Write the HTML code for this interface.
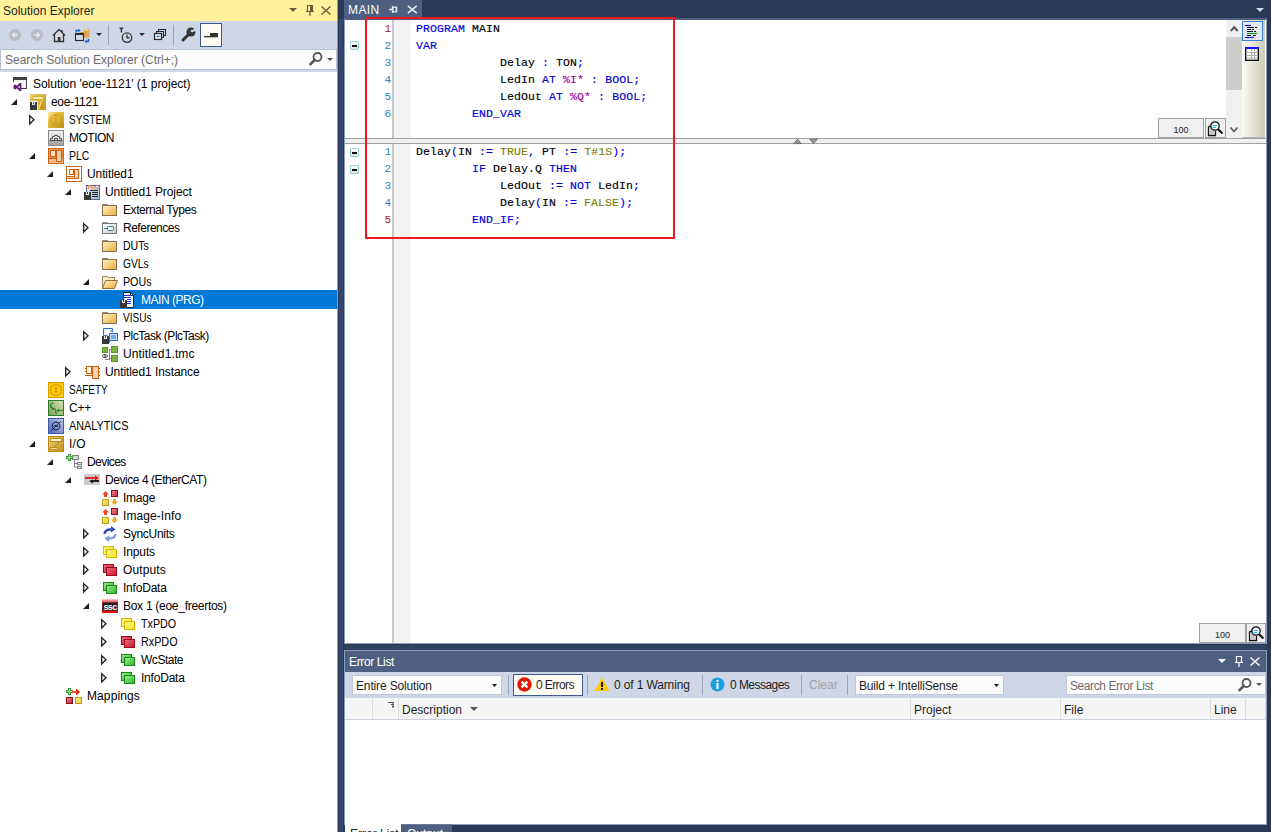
<!DOCTYPE html>
<html><head><meta charset="utf-8">
<style>
*{margin:0;padding:0;box-sizing:border-box}
html,body{width:1271px;height:832px;overflow:hidden;background:#293955;font-family:"Liberation Sans",sans-serif;font-size:12px;color:#1e1e1e}
.abs{position:absolute}
svg{position:absolute;overflow:visible}
#se{position:absolute;left:0;top:0;width:337px;height:832px;background:#fff}
#sehdr{position:absolute;left:0;top:0;width:337px;height:21px;background:#fff29d}
#sehdr .t{position:absolute;left:3px;top:4px;font-size:12px;color:#1e1e1e}
#setb{position:absolute;left:0;top:21px;width:337px;height:28px;background:#cfd6e5}
#sesearch{position:absolute;left:0;top:49px;width:337px;height:21px;background:#fcfcfc;border:1px solid #b9c1d2}
#sesearch .t{position:absolute;left:4px;top:3px;color:#6d6d6d}
#sebot{position:absolute;left:0;top:70px;width:337px;height:2px;background:#cfd6e5}
.sel{position:absolute;left:0;width:337px;height:19px;background:#0078d7}
.tl{position:absolute;height:18px;line-height:18px;white-space:nowrap;color:#000}
.tl.s{color:#fff}
.tab{position:absolute;left:344px;top:0;width:78px;height:19px;background:#4d6082;color:#fff}
.ed{position:absolute;background:#fff}
.ln{position:absolute;left:360px;width:31px;text-align:right;font-family:"Liberation Mono",monospace;font-size:11px;line-height:17px;height:17px}
.cd{position:absolute;left:416px;white-space:pre;font-family:"Liberation Mono",monospace;font-size:11.5px;line-height:17px;height:17px;color:#000;letter-spacing:0.1px;-webkit-text-stroke:0.15px currentColor}
.fold{position:absolute;width:9px;height:9px;border:1px solid #9ad0d8;background:linear-gradient(#fff,#e0e0e0);border-radius:1px}
.fold:after{content:"";position:absolute;left:1px;top:3px;width:5px;height:2px;background:#111}
.gsep{position:absolute;left:392px;width:2px;background:#c8c8c8}
.gcol{position:absolute;left:394px;width:17px;background:#f3f3f3}
.zoom{position:absolute;background:#f0f0f0;border:1px solid #a0a0a0;font-size:9px;text-align:center;color:#1e1e1e;line-height:22px !important}
.mag{position:absolute;background:#f0f0f0;border:1px solid #a0a0a0}
.redbox{position:absolute;left:365px;top:17px;width:310px;height:222px;border:2px solid #f01820}
#el{position:absolute;left:344px;top:650px;width:923px;height:175px;background:#fff;border:1px solid #8e9bc0}
#elhdr{position:absolute;left:0;top:0;width:921px;height:21px;background:#4d6082}
#elhdr .t{position:absolute;left:4px;top:4px;color:#fff;letter-spacing:-0.37px}
#eltb{position:absolute;left:0;top:21px;width:921px;height:26px;background:#cfd6e5}
.dd{position:absolute;background:#fcfcfc;border:1px solid #c0c8d8;height:20px}
.dd .t{position:absolute;left:3px;top:3px;color:#1e1e1e}
.vsep{position:absolute;width:1px;background:#99a4bf}
#elcol{position:absolute;left:0;top:47px;width:921px;height:22px;background:#f5f5f5;border-bottom:1px solid #ccd3e0}
.ch{position:absolute;top:2px;height:21px;line-height:21px;color:#1e1e1e}
.csep{position:absolute;top:0;width:1px;height:21px;background:#dcdcdc}
</style></head><body>

<!-- Solution explorer -->
<div id="se">
 <div id="sehdr"><div class="t">Solution Explorer</div>
  <svg style="left:289px;top:8px" width="9" height="5"><path d="M0 0 H8 L4 4 Z" fill="#6b5c3a"/></svg>
  <svg style="left:305px;top:5px" width="10" height="11"><path d="M2.5 0.5 H7.5 V6.5 H2.5 Z M1 6.5 H9 M5 6.5 V11" fill="none" stroke="#6b5c3a" stroke-width="1.2"/><rect x="5" y="1" width="2" height="5" fill="#6b5c3a"/></svg>
  <svg style="left:321px;top:6px" width="10" height="9"><path d="M0.5 0.5 L9.5 8.5 M9.5 0.5 L0.5 8.5" stroke="#6b5c3a" stroke-width="1.4"/></svg>
 </div>
 <div id="setb">
  <svg style="left:9px;top:8px" width="13" height="13"><circle cx="6" cy="6" r="6" fill="#b9bcc4"/><path d="M9 6 H3.5 M6 3.5 L3.5 6 L6 8.5" stroke="#e6e8ee" stroke-width="1.5" fill="none"/></svg>
  <svg style="left:31px;top:8px" width="13" height="13"><circle cx="6" cy="6" r="6" fill="#b9bcc4"/><path d="M3 6 H8.5 M6 3.5 L8.5 6 L6 8.5" stroke="#e6e8ee" stroke-width="1.5" fill="none"/></svg>
  <svg style="left:52px;top:7px" width="15" height="15"><path d="M1 7.5 L7 1.5 L13 7.5 M2.5 6 V13.5 H11.5 V6 M10 2 V4" fill="#d8d8e0" stroke="#333" stroke-width="1.3"/><rect x="5.8" y="9" width="2.6" height="4.5" fill="#333"/></svg>
  <svg style="left:74px;top:7px" width="17" height="16"><path d="M10 1.5 H12 L13 0.8 H15.5 V9.5 H6 V4 H10 Z" fill="#e0a850"/><rect x="11" y="1.5" width="3.5" height="1.2" fill="#f6e0b0"/><rect x="1.5" y="5.5" width="8" height="7" fill="#d8d8e0" stroke="#2a2a2a" stroke-width="1.1"/><rect x="1" y="5" width="9" height="2" fill="#2a2a2a"/><path d="M2.2 4.5 V2.5 H5" stroke="#1560c0" stroke-width="1.3" fill="none"/><path d="M4.5 0.8 L6.6 2.5 L4.5 4.2 Z" fill="#1560c0"/><path d="M14.5 11 V13.5 H12" stroke="#1560c0" stroke-width="1.4" fill="none"/><path d="M12.5 11.8 L10.5 13.5 L12.5 15.2 Z" fill="#1560c0"/></svg>
  <svg style="left:96px;top:12px" width="7" height="4"><path d="M0 0 H6 L3 3 Z" fill="#1e2a40"/></svg>
  <div class="vsep" style="left:108px;top:4px;height:20px"></div>
  <svg style="left:118px;top:6px" width="16" height="17"><path d="M0.8 0.6 H6 L3.4 3 Z" fill="#333"/><rect x="2.7" y="2" width="1.4" height="3.5" fill="#333"/><circle cx="9" cy="10.6" r="4.7" fill="none" stroke="#333" stroke-width="1.3"/><path d="M9 7.6 V10.9 H11.6" stroke="#333" stroke-width="1.3" fill="none"/></svg>
  <svg style="left:139px;top:12px" width="7" height="4"><path d="M0 0 H6 L3 3 Z" fill="#1e2a40"/></svg>
  <svg style="left:153px;top:7px" width="14" height="13"><rect x="1.5" y="5.5" width="7" height="6" fill="#e4e6ee" stroke="#2a2a2a" stroke-width="1.2"/><path d="M3.5 8.5 H6.5" stroke="#1560c0" stroke-width="1"/><path d="M3.5 5 V3.5 H10.5 V9.5 H9 M5.5 3 V1.5 H12.5 V7.5 H11" fill="none" stroke="#2a2a2a" stroke-width="1.1"/></svg>
  <div class="vsep" style="left:173px;top:4px;height:20px"></div>
  <svg style="left:181px;top:6px" width="16" height="15"><circle cx="10" cy="5" r="4.5" fill="#333"/><path d="M10 5 L13 1.5 L16 4 Z" fill="#cfd6e5"/><circle cx="11" cy="4" r="1.3" fill="#cfd6e5"/><path d="M8 7 L2 13" stroke="#333" stroke-width="3" stroke-linecap="round"/></svg>
  <div class="abs" style="left:200px;top:2px;width:22px;height:24px;background:#fffdf6;border:1.5px solid #3c5a8c"></div>
  <svg style="left:204px;top:12px" width="14" height="5"><rect x="0" y="3" width="7" height="1.3" fill="#333"/><rect x="6" y="0" width="8" height="4.3" fill="#333"/></svg>
 </div>
 <div id="sesearch"><div class="t">Search Solution Explorer (Ctrl+;)</div>
  <svg style="left:307px;top:1px" width="15" height="16"><circle cx="9.5" cy="6" r="4" fill="none" stroke="#555" stroke-width="1.8"/><path d="M6.8 8.8 L2.5 13.2" stroke="#555" stroke-width="2.6" stroke-linecap="round"/></svg>
  <svg style="left:326px;top:8px" width="7" height="4"><path d="M0 0 H6 L3 3 Z" fill="#555"/></svg>
 </div>
 <div id="sebot"></div>
<svg class="ic" style="left:12px;top:76px" width="16" height="16"><rect x="1.5" y="1.5" width="13" height="11" fill="#f4f4f4" stroke="#424242"/><rect x="1" y="1" width="14" height="3" fill="#424242"/><rect x="0" y="6" width="9" height="10" fill="#fff"/><path d="M2.5 9 L2.5 13 M2.5 9 L8.5 14.5 M2.5 13 L8.5 7.5 M8.5 7 L8.5 15" stroke="#68217a" stroke-width="1.8" fill="none"/></svg>
<div class="tl" style="left:33px;top:75px;letter-spacing:-0.03px">Solution 'eoe-1121' (1 project)</div>
<svg class="a" style="left:11px;top:99px" width="6" height="6"><path d="M6 0 L6 6 L0 6 Z" fill="#1e1e1e"/></svg>
<svg class="ic" style="left:30px;top:94px" width="16" height="16"><defs><linearGradient id="gp" x1="0" y1="0" x2="1" y2="1"><stop offset="0" stop-color="#f0d070"/><stop offset="1" stop-color="#c09010"/></linearGradient></defs><rect x="0" y="0" width="16" height="16" fill="url(#gp)"/><rect x="2.5" y="2.5" width="10.5" height="3" fill="#f8e6a8" stroke="#d8b040" stroke-width="1"/><path d="M12.5 5.5 L8.5 15.5" stroke="#f0d880" stroke-width="1.6"/><path d="M13.6 5.8 L9.8 15.5" stroke="#b88a10" stroke-width="0.8"/><rect x="0" y="7" width="8" height="9" fill="#eef0f8"/><rect x="0" y="8" width="7" height="8" fill="#383838"/><rect x="2" y="8" width="3" height="3" fill="#f0f0f0"/><rect x="3" y="8.5" width="1" height="1.8" fill="#383838"/></svg>
<div class="tl" style="left:51px;top:93px;letter-spacing:-0.34px">eoe-1121</div>
<svg class="a" style="left:29px;top:115px" width="7" height="11"><path d="M0.7 0.6 L5 4.8 L0.7 9 Z" fill="none" stroke="#1e1e1e" stroke-width="1.3" stroke-linejoin="miter"/></svg>
<svg class="ic" style="left:48px;top:112px" width="16" height="16"><defs><linearGradient id="gs" x1="0" y1="0" x2="1" y2="1"><stop offset="0" stop-color="#f8e8a0"/><stop offset="0.35" stop-color="#e8c040"/><stop offset="1" stop-color="#c09010"/></linearGradient></defs><rect x="0" y="0" width="16" height="16" fill="url(#gs)"/><path d="M8 2.5 A5.5 5.5 0 1 0 8 13.5 M8 2 V14 M8 2.5 L10 2.2 L10.5 3.5 L12 3.5 L12.5 5 L13.8 5.8 L13.3 7.3 L14 8.5 L13 9.8 L13.3 11.2 L11.8 11.8 L11.2 13.2 L9.6 13.2 L8 13.5 M5 7 Q6.5 5.5 8 7 M5 9.5 Q6.5 11 8 9.5" fill="none" stroke="#c8961e" stroke-width="1"/></svg>
<div class="tl" style="left:69px;top:111px;transform:scaleX(0.847);transform-origin:0 0">SYSTEM</div>
<svg class="ic" style="left:48px;top:130px" width="16" height="16"><defs><linearGradient id="gm" x1="0" y1="0" x2="0" y2="1"><stop offset="0" stop-color="#f2f2f2"/><stop offset="1" stop-color="#c4c4c4"/></linearGradient></defs><rect x="0.5" y="0.5" width="15" height="15" fill="url(#gm)" stroke="#8c8c8c"/><path d="M1.5 10.5 H14.5 M2.5 10.5 V8.5 H4.5 V6.5 H6.5 V5.5 H9.5 V6.5 H11.5 V8.5 H13.5 V10.5 M6.5 10.5 V8.5 H9.5 V10.5" fill="none" stroke="#505050" stroke-width="1"/><rect x="1" y="11" width="14" height="4" fill="#a8a8a8"/></svg>
<div class="tl" style="left:69px;top:129px;letter-spacing:-0.5px">MOTION</div>
<svg class="a" style="left:29px;top:153px" width="6" height="6"><path d="M6 0 L6 6 L0 6 Z" fill="#1e1e1e"/></svg>
<svg class="ic" style="left:48px;top:148px" width="16" height="16"><defs><linearGradient id="gpl" x1="0" y1="0" x2="1" y2="1"><stop offset="0" stop-color="#f0a866"/><stop offset="1" stop-color="#e07a28"/></linearGradient></defs><rect x="0.5" y="0.5" width="15" height="15" fill="url(#gpl)" stroke="#d0620e"/><rect x="1" y="10" width="14" height="5" fill="#f3b684"/><rect x="3" y="3" width="4" height="5" fill="#fde6cc"/><rect x="9" y="3" width="4" height="10" fill="#f8c99c"/><path d="M2.5 2.5 H7.5 V8.5 H2.5 Z M8.5 2.5 H13.5 V13.5 H8.5 Z M1 10.5 H8.5" fill="none" stroke="#c95e10"/></svg>
<div class="tl" style="left:69px;top:147px;transform:scaleX(0.867);transform-origin:0 0">PLC</div>
<svg class="a" style="left:47px;top:171px" width="6" height="6"><path d="M6 0 L6 6 L0 6 Z" fill="#1e1e1e"/></svg>
<svg class="ic" style="left:66px;top:166px" width="16" height="16"><rect x="0.5" y="0.5" width="15" height="15" fill="#fff" stroke="#d0620e"/><rect x="3.5" y="3.5" width="4" height="5" fill="#fff4e6" stroke="#d0620e"/><rect x="8.5" y="3.5" width="4" height="9" fill="#f6d2ae" stroke="#d0620e"/><path d="M1 10.5 H8.5 M1.5 12.5 H8" stroke="#d0620e"/><rect x="1" y="11" width="7" height="1" fill="#f6d2ae"/></svg>
<div class="tl" style="left:87px;top:165px;letter-spacing:-0.1px">Untitled1</div>
<svg class="a" style="left:65px;top:189px" width="6" height="6"><path d="M6 0 L6 6 L0 6 Z" fill="#1e1e1e"/></svg>
<svg class="ic" style="left:84px;top:184px" width="16" height="16"><defs><linearGradient id="gpp" x1="0" y1="0" x2="1" y2="1"><stop offset="0" stop-color="#e8eef6"/><stop offset="1" stop-color="#9eb3d0"/></linearGradient></defs><rect x="2.5" y="1.5" width="13" height="14" fill="url(#gpp)" stroke="#5a6e8c"/><rect x="2" y="1" width="14" height="1" fill="#2040e0"/><text x="9.3" y="4.6" font-size="5.5" font-family="Liberation Sans" font-weight="bold" fill="#f08a10" text-anchor="middle">PLC</text><path d="M6 6.5 H14 M8 8.5 H14 M8 10.5 H14 M8 12.5 H14" stroke="#222" stroke-width="1"/><rect x="0" y="8" width="7" height="8" fill="#383838"/><rect x="2" y="8" width="3" height="3" fill="#f0f0f0"/><rect x="3" y="8" width="1" height="2" fill="#383838"/></svg>
<div class="tl" style="left:105px;top:183px;letter-spacing:-0.08px">Untitled1 Project</div>
<svg class="ic" style="left:102px;top:202px" width="16" height="16"><defs><linearGradient id="gf" x1="0" y1="0" x2="1" y2="1"><stop offset="0" stop-color="#fff6c8"/><stop offset="1" stop-color="#eaa830"/></linearGradient></defs><path d="M0.5 4 V2.5 H5.5 L6.5 3.5 H6.5 V4" fill="#fbeec0" stroke="#9a8060"/><rect x="0.5" y="3.5" width="14" height="10" fill="url(#gf)" stroke="#8a7050"/></svg>
<div class="tl" style="left:123px;top:201px;letter-spacing:-0.42px">External Types</div>
<svg class="a" style="left:83px;top:223px" width="7" height="11"><path d="M0.7 0.6 L5 4.8 L0.7 9 Z" fill="none" stroke="#1e1e1e" stroke-width="1.3" stroke-linejoin="miter"/></svg>
<svg class="ic" style="left:102px;top:220px" width="16" height="16"><defs><linearGradient id="gr" x1="0" y1="0" x2="1" y2="1"><stop offset="0" stop-color="#ffffff"/><stop offset="1" stop-color="#c8c8c8"/></linearGradient></defs><path d="M0.5 4 V2.5 H5.5 L6.5 3.5 V4" fill="#f2f2f2" stroke="#999"/><rect x="0.5" y="3.5" width="14" height="10" fill="url(#gr)" stroke="#777"/><rect x="5.5" y="6.5" width="6" height="4" rx="1" fill="#e8f4f4" stroke="#3a7d8c"/><path d="M2 8.5 H5.5" stroke="#3a7d8c"/></svg>
<div class="tl" style="left:123px;top:219px;letter-spacing:-0.49px">References</div>
<svg class="ic" style="left:102px;top:238px" width="16" height="16"><defs><linearGradient id="gf" x1="0" y1="0" x2="1" y2="1"><stop offset="0" stop-color="#fff6c8"/><stop offset="1" stop-color="#eaa830"/></linearGradient></defs><path d="M0.5 4 V2.5 H5.5 L6.5 3.5 H6.5 V4" fill="#fbeec0" stroke="#9a8060"/><rect x="0.5" y="3.5" width="14" height="10" fill="url(#gf)" stroke="#8a7050"/></svg>
<div class="tl" style="left:123px;top:237px;transform:scaleX(0.879);transform-origin:0 0">DUTs</div>
<svg class="ic" style="left:102px;top:256px" width="16" height="16"><defs><linearGradient id="gf" x1="0" y1="0" x2="1" y2="1"><stop offset="0" stop-color="#fff6c8"/><stop offset="1" stop-color="#eaa830"/></linearGradient></defs><path d="M0.5 4 V2.5 H5.5 L6.5 3.5 H6.5 V4" fill="#fbeec0" stroke="#9a8060"/><rect x="0.5" y="3.5" width="14" height="10" fill="url(#gf)" stroke="#8a7050"/></svg>
<div class="tl" style="left:123px;top:255px;transform:scaleX(0.850);transform-origin:0 0">GVLs</div>
<svg class="a" style="left:83px;top:279px" width="6" height="6"><path d="M6 0 L6 6 L0 6 Z" fill="#1e1e1e"/></svg>
<svg class="ic" style="left:102px;top:274px" width="16" height="16"><defs><linearGradient id="gfo" x1="0" y1="0" x2="1" y2="1"><stop offset="0" stop-color="#fff6c8"/><stop offset="1" stop-color="#eaa830"/></linearGradient></defs><path d="M0.5 14 V2.5 H5.5 L6.5 3.5 H12.5 V6.5" fill="#fbeec0" stroke="#9a8060"/><path d="M0.5 14.5 L3.5 6.5 H15.5 L12.5 14.5 Z" fill="url(#gfo)" stroke="#8a7050"/></svg>
<div class="tl" style="left:123px;top:273px;transform:scaleX(0.890);transform-origin:0 0">POUs</div>
<div class="sel" style="top:290px"></div>
<svg class="ic" style="left:120px;top:292px" width="16" height="16"><path d="M3.5 0.5 H10.5 L13.5 3.5 V15.5 H3.5 Z" fill="#fff" stroke="#222"/><path d="M10.5 0.5 V3.5 H13.5" fill="none" stroke="#222"/><path d="M4 3.5 H10 M4 5.5 H11 M7 7.5 H11 M7 9.5 H11 M7 11.5 H11" stroke="#1a2ce8" stroke-width="1"/><rect x="0" y="8" width="7" height="8" fill="#383838"/><rect x="2" y="8" width="3" height="3" fill="#f0f0f0"/><rect x="3" y="8" width="1" height="2" fill="#383838"/></svg>
<div class="tl s" style="left:141px;top:291px;letter-spacing:-0.48px">MAIN (PRG)</div>
<svg class="ic" style="left:102px;top:310px" width="16" height="16"><defs><linearGradient id="gf" x1="0" y1="0" x2="1" y2="1"><stop offset="0" stop-color="#fff6c8"/><stop offset="1" stop-color="#eaa830"/></linearGradient></defs><path d="M0.5 4 V2.5 H5.5 L6.5 3.5 H6.5 V4" fill="#fbeec0" stroke="#9a8060"/><rect x="0.5" y="3.5" width="14" height="10" fill="url(#gf)" stroke="#8a7050"/></svg>
<div class="tl" style="left:123px;top:309px;transform:scaleX(0.838);transform-origin:0 0">VISUs</div>
<svg class="a" style="left:83px;top:331px" width="7" height="11"><path d="M0.7 0.6 L5 4.8 L0.7 9 Z" fill="none" stroke="#1e1e1e" stroke-width="1.3" stroke-linejoin="miter"/></svg>
<svg class="ic" style="left:102px;top:328px" width="16" height="16"><path d="M5.5 7.5 H1.5 V0.5 H10.5 V2" fill="none" stroke="#1e6fd9"/><path d="M8 2.5 H12 L10 4.5 Z" fill="#1e6fd9"/><rect x="7.5" y="5.5" width="8" height="7" fill="#cfe1f7" stroke="#1e6fd9"/><path d="M9 8 H14 M9 10 H14" stroke="#1e6fd9"/><path d="M7.5 12.5 V14.5 H5" fill="none" stroke="#1e6fd9"/><rect x="0" y="8" width="7" height="8" fill="#383838"/><rect x="2" y="8" width="3" height="3" fill="#f0f0f0"/><rect x="3" y="8" width="1" height="2" fill="#383838"/></svg>
<div class="tl" style="left:123px;top:327px;letter-spacing:-0.48px">PlcTask (PlcTask)</div>
<svg class="ic" style="left:102px;top:346px" width="16" height="16"><rect x="0.5" y="1.5" width="5" height="5" fill="#7cb342" stroke="#5f9a30"/><rect x="9.5" y="0.5" width="6" height="6" fill="#7cb342" stroke="#5f9a30"/><rect x="9.5" y="9.5" width="6" height="6" fill="#7cb342" stroke="#5f9a30"/><path d="M9.5 3.5 H7.5 V13.5 H3 M7.5 12.5 H9.5" stroke="#888" fill="none" stroke-width="1.2"/><ellipse cx="3" cy="10" rx="2.6" ry="1.6" fill="#fff" stroke="#555"/><circle cx="3" cy="10" r="0.9" fill="#555"/></svg>
<div class="tl" style="left:123px;top:345px;letter-spacing:0.12px">Untitled1.tmc</div>
<svg class="a" style="left:65px;top:367px" width="7" height="11"><path d="M0.7 0.6 L5 4.8 L0.7 9 Z" fill="none" stroke="#1e1e1e" stroke-width="1.3" stroke-linejoin="miter"/></svg>
<svg class="ic" style="left:84px;top:364px" width="16" height="16"><rect x="2.5" y="2.5" width="5" height="7" fill="#fff4e6" stroke="#d0620e"/><rect x="8.5" y="2.5" width="6" height="12" fill="#f6d2ae" stroke="#d0620e"/><path d="M1 4.5 H2.5 M1 7.5 H2.5 M14.5 4.5 H16 M14.5 7.5 H16 M14.5 11.5 H16 M1 11.5 H8.5 M7.5 6 H8.5" stroke="#d0620e" stroke-width="1"/></svg>
<div class="tl" style="left:105px;top:363px;letter-spacing:-0.08px">Untitled1 Instance</div>
<svg class="ic" style="left:48px;top:382px" width="16" height="16"><rect x="0.5" y="0.5" width="15" height="15" fill="#ffc800" stroke="#d8a000"/><path d="M8 3 L10 2.5 L11 4 L13 4.5 L12.8 6.5 L14 8 L12.8 9.5 L13 11.5 L11 12 L10 13.5 L8 13 L6 13.5 L5 12 L3 11.5 L3.2 9.5 L2 8 L3.2 6.5 L3 4.5 L5 4 L6 2.5 Z M8 5 V11 M6.5 6.5 H9.5 M6.5 9.5 H9.5" fill="none" stroke="#c89000" stroke-width="0.9"/></svg>
<div class="tl" style="left:69px;top:381px;transform:scaleX(0.830);transform-origin:0 0">SAFETY</div>
<svg class="ic" style="left:48px;top:400px" width="16" height="16"><defs><linearGradient id="gc" x1="1" y1="0" x2="0" y2="1"><stop offset="0" stop-color="#d6e2b8"/><stop offset="1" stop-color="#7aa050"/></linearGradient></defs><rect x="0.5" y="0.5" width="15" height="15" fill="url(#gc)" stroke="#2e7a2e"/><path d="M5.5 3 Q2.5 3 2.5 6 Q2.5 8 5 8 M4 10 Q6.5 6 8 11 Q7 13.5 9 13 M9 10.5 H12 M10.5 9 V12 M12.5 10.5 H15" fill="none" stroke="#2a7a1a" stroke-width="1.1"/></svg>
<div class="tl" style="left:69px;top:399px;letter-spacing:-0.25px">C++</div>
<svg class="ic" style="left:48px;top:418px" width="16" height="16"><defs><linearGradient id="ga" x1="1" y1="0" x2="0" y2="1"><stop offset="0" stop-color="#c2cdec"/><stop offset="1" stop-color="#4a62b0"/></linearGradient></defs><rect x="0.5" y="0.5" width="15" height="15" fill="url(#ga)" stroke="#3a58a8"/><circle cx="8" cy="8" r="3.8" fill="none" stroke="#1e2e5e" stroke-width="1.2"/><path d="M6 8.5 Q7 6 8 8 Q9 10 10 7.5 M3 13 L13 3" stroke="#1e2e5e" stroke-width="1" fill="none"/></svg>
<div class="tl" style="left:69px;top:417px;transform:scaleX(0.902);transform-origin:0 0">ANALYTICS</div>
<svg class="a" style="left:29px;top:441px" width="6" height="6"><path d="M6 0 L6 6 L0 6 Z" fill="#1e1e1e"/></svg>
<svg class="ic" style="left:48px;top:436px" width="16" height="16"><defs><linearGradient id="gio" x1="0" y1="0" x2="1" y2="1"><stop offset="0" stop-color="#f0cf74"/><stop offset="1" stop-color="#c29418"/></linearGradient></defs><rect x="0.5" y="0.5" width="15" height="15" fill="url(#gio)" stroke="#b8860b"/><rect x="2.5" y="2.5" width="11" height="3" fill="#fff4c8" stroke="#b88a20"/><rect x="2.5" y="11.5" width="7" height="2" fill="#f8e6a8" stroke="#b88a20"/><path d="M11 6 L6 11" stroke="#b88a20" stroke-width="1"/></svg>
<div class="tl" style="left:69px;top:435px;letter-spacing:0.25px">I/O</div>
<svg class="a" style="left:47px;top:459px" width="6" height="6"><path d="M6 0 L6 6 L0 6 Z" fill="#1e1e1e"/></svg>
<svg class="ic" style="left:66px;top:454px" width="16" height="16"><path d="M8.5 5.5 V13 H11 M8.5 9.5 H11" stroke="#808080" fill="none"/><rect x="6.5" y="1.5" width="6" height="4" fill="#d8d8d8" stroke="#808080"/><rect x="11.5" y="8.5" width="4" height="2.2" fill="#e8e8e8" stroke="#808080"/><rect x="11.5" y="12.3" width="4" height="2.2" fill="#e8e8e8" stroke="#808080"/><path d="M3.5 0 V7 M0 3.5 H7" stroke="#3c9a3c" stroke-width="3"/><path d="M3.5 1 V6 M1 3.5 H6" stroke="#a8dca8" stroke-width="1"/></svg>
<div class="tl" style="left:87px;top:453px;letter-spacing:-0.57px">Devices</div>
<svg class="a" style="left:65px;top:477px" width="6" height="6"><path d="M6 0 L6 6 L0 6 Z" fill="#1e1e1e"/></svg>
<svg class="ic" style="left:84px;top:472px" width="16" height="16"><rect x="0" y="2" width="16" height="11" fill="#cccccc"/><path d="M1 6 H13" stroke="#f01010" stroke-width="1.8"/><path d="M11 3.5 L15 6 L11 8.5 Z" fill="#f01010"/><path d="M15 9 H7" stroke="#101010" stroke-width="1.8"/><path d="M9 7.5 L5 9 L9 11.5 Z" fill="#101010"/></svg>
<div class="tl" style="left:105px;top:471px;letter-spacing:-0.44px">Device 4 (EtherCAT)</div>
<svg class="ic" style="left:102px;top:490px" width="16" height="16"><defs><linearGradient id="gir" x1="0" y1="0" x2="1" y2="1"><stop offset="0" stop-color="#f08890"/><stop offset="1" stop-color="#c02838"/></linearGradient><linearGradient id="giy" x1="0" y1="0" x2="1" y2="1"><stop offset="0" stop-color="#f8f070"/><stop offset="1" stop-color="#e0c840"/></linearGradient></defs><rect x="9.5" y="0.5" width="6" height="6" fill="url(#gir)" stroke="#8c1020"/><rect x="0.5" y="9.5" width="6" height="6" fill="url(#giy)" stroke="#c8a020"/><path d="M3.5 1 L0 4.5 H2 V7 H5 V4.5 H7 Z" fill="#f04830"/><path d="M12.5 15 L9 11.5 H11 V9 H14 V11.5 H16 Z" fill="#f0a820"/></svg>
<div class="tl" style="left:123px;top:489px;letter-spacing:-0.25px">Image</div>
<svg class="ic" style="left:102px;top:508px" width="16" height="16"><defs><linearGradient id="gir" x1="0" y1="0" x2="1" y2="1"><stop offset="0" stop-color="#f08890"/><stop offset="1" stop-color="#c02838"/></linearGradient><linearGradient id="giy" x1="0" y1="0" x2="1" y2="1"><stop offset="0" stop-color="#f8f070"/><stop offset="1" stop-color="#e0c840"/></linearGradient></defs><rect x="9.5" y="0.5" width="6" height="6" fill="url(#gir)" stroke="#8c1020"/><rect x="0.5" y="9.5" width="6" height="6" fill="url(#giy)" stroke="#c8a020"/><path d="M3.5 1 L0 4.5 H2 V7 H5 V4.5 H7 Z" fill="#f04830"/><path d="M12.5 15 L9 11.5 H11 V9 H14 V11.5 H16 Z" fill="#f0a820"/></svg>
<div class="tl" style="left:123px;top:507px;letter-spacing:0.08px">Image-Info</div>
<svg class="a" style="left:83px;top:529px" width="7" height="11"><path d="M0.7 0.6 L5 4.8 L0.7 9 Z" fill="none" stroke="#1e1e1e" stroke-width="1.3" stroke-linejoin="miter"/></svg>
<svg class="ic" style="left:102px;top:526px" width="16" height="16"><path d="M2.5 8 Q3 3 10 3.5" stroke="#2c4fb8" stroke-width="2.4" fill="none"/><path d="M9 0 L13.5 3.5 L9 6.5 Z" fill="#2c4fb8"/><path d="M13.5 8 Q13 13 6 12.5" stroke="#7d9be3" stroke-width="2.4" fill="none"/><path d="M7 9.5 L2.5 12.5 L7 16 Z" fill="#7d9be3"/></svg>
<div class="tl" style="left:123px;top:525px;letter-spacing:-0.28px">SyncUnits</div>
<svg class="a" style="left:83px;top:547px" width="7" height="11"><path d="M0.7 0.6 L5 4.8 L0.7 9 Z" fill="none" stroke="#1e1e1e" stroke-width="1.3" stroke-linejoin="miter"/></svg>
<svg class="ic" style="left:102px;top:544px" width="16" height="16"><defs><linearGradient id="gin" x1="0" y1="0" x2="1" y2="1"><stop offset="0" stop-color="#f4f888"/><stop offset="1" stop-color="#f8e020"/></linearGradient></defs><rect x="1.5" y="2.5" width="10" height="8" fill="url(#gin)" stroke="#d8b400"/><rect x="4.5" y="5.5" width="10" height="8" fill="url(#gin)" stroke="#d8b400"/></svg>
<div class="tl" style="left:123px;top:543px;letter-spacing:-0.12px">Inputs</div>
<svg class="a" style="left:83px;top:565px" width="7" height="11"><path d="M0.7 0.6 L5 4.8 L0.7 9 Z" fill="none" stroke="#1e1e1e" stroke-width="1.3" stroke-linejoin="miter"/></svg>
<svg class="ic" style="left:102px;top:562px" width="16" height="16"><defs><linearGradient id="gout" x1="0" y1="0" x2="1" y2="1"><stop offset="0" stop-color="#f07080"/><stop offset="1" stop-color="#c81028"/></linearGradient></defs><rect x="1.5" y="2.5" width="10" height="8" fill="url(#gout)" stroke="#9a0a1a"/><rect x="4.5" y="5.5" width="10" height="8" fill="url(#gout)" stroke="#9a0a1a"/></svg>
<div class="tl" style="left:123px;top:561px;letter-spacing:0.13px">Outputs</div>
<svg class="a" style="left:83px;top:583px" width="7" height="11"><path d="M0.7 0.6 L5 4.8 L0.7 9 Z" fill="none" stroke="#1e1e1e" stroke-width="1.3" stroke-linejoin="miter"/></svg>
<svg class="ic" style="left:102px;top:580px" width="16" height="16"><defs><linearGradient id="ginf" x1="0" y1="0" x2="1" y2="1"><stop offset="0" stop-color="#a0f090"/><stop offset="1" stop-color="#28b428"/></linearGradient></defs><rect x="1.5" y="2.5" width="10" height="8" fill="url(#ginf)" stroke="#18881a"/><rect x="4.5" y="5.5" width="10" height="8" fill="url(#ginf)" stroke="#18881a"/></svg>
<div class="tl" style="left:123px;top:579px;letter-spacing:-0.21px">InfoData</div>
<svg class="a" style="left:83px;top:603px" width="6" height="6"><path d="M6 0 L6 6 L0 6 Z" fill="#1e1e1e"/></svg>
<svg class="ic" style="left:102px;top:598px" width="16" height="16"><defs><linearGradient id="gss" x1="0" y1="0" x2="0" y2="1"><stop offset="0" stop-color="#f8d0d0"/><stop offset="0.3" stop-color="#e82020"/><stop offset="1" stop-color="#e01010"/></linearGradient></defs><rect x="0" y="1" width="16" height="14" fill="url(#gss)"/><rect x="0.5" y="4.5" width="15" height="8" fill="#202020"/><text x="8" y="11.6" font-size="9" font-family="Liberation Sans" font-weight="bold" fill="#fff" text-anchor="middle" letter-spacing="-0.6">ssc</text></svg>
<div class="tl" style="left:123px;top:597px;letter-spacing:-0.28px">Box 1 (eoe_freertos)</div>
<svg class="a" style="left:101px;top:619px" width="7" height="11"><path d="M0.7 0.6 L5 4.8 L0.7 9 Z" fill="none" stroke="#1e1e1e" stroke-width="1.3" stroke-linejoin="miter"/></svg>
<svg class="ic" style="left:120px;top:616px" width="16" height="16"><defs><linearGradient id="gin" x1="0" y1="0" x2="1" y2="1"><stop offset="0" stop-color="#f4f888"/><stop offset="1" stop-color="#f8e020"/></linearGradient></defs><rect x="1.5" y="2.5" width="10" height="8" fill="url(#gin)" stroke="#d8b400"/><rect x="4.5" y="5.5" width="10" height="8" fill="url(#gin)" stroke="#d8b400"/></svg>
<div class="tl" style="left:141px;top:615px;transform:scaleX(0.894);transform-origin:0 0">TxPDO</div>
<svg class="a" style="left:101px;top:637px" width="7" height="11"><path d="M0.7 0.6 L5 4.8 L0.7 9 Z" fill="none" stroke="#1e1e1e" stroke-width="1.3" stroke-linejoin="miter"/></svg>
<svg class="ic" style="left:120px;top:634px" width="16" height="16"><defs><linearGradient id="gout" x1="0" y1="0" x2="1" y2="1"><stop offset="0" stop-color="#f07080"/><stop offset="1" stop-color="#c81028"/></linearGradient></defs><rect x="1.5" y="2.5" width="10" height="8" fill="url(#gout)" stroke="#9a0a1a"/><rect x="4.5" y="5.5" width="10" height="8" fill="url(#gout)" stroke="#9a0a1a"/></svg>
<div class="tl" style="left:141px;top:633px;transform:scaleX(0.898);transform-origin:0 0">RxPDO</div>
<svg class="a" style="left:101px;top:655px" width="7" height="11"><path d="M0.7 0.6 L5 4.8 L0.7 9 Z" fill="none" stroke="#1e1e1e" stroke-width="1.3" stroke-linejoin="miter"/></svg>
<svg class="ic" style="left:120px;top:652px" width="16" height="16"><defs><linearGradient id="ginf" x1="0" y1="0" x2="1" y2="1"><stop offset="0" stop-color="#a0f090"/><stop offset="1" stop-color="#28b428"/></linearGradient></defs><rect x="1.5" y="2.5" width="10" height="8" fill="url(#ginf)" stroke="#18881a"/><rect x="4.5" y="5.5" width="10" height="8" fill="url(#ginf)" stroke="#18881a"/></svg>
<div class="tl" style="left:141px;top:651px;letter-spacing:-0.47px">WcState</div>
<svg class="a" style="left:101px;top:673px" width="7" height="11"><path d="M0.7 0.6 L5 4.8 L0.7 9 Z" fill="none" stroke="#1e1e1e" stroke-width="1.3" stroke-linejoin="miter"/></svg>
<svg class="ic" style="left:120px;top:670px" width="16" height="16"><defs><linearGradient id="ginf" x1="0" y1="0" x2="1" y2="1"><stop offset="0" stop-color="#a0f090"/><stop offset="1" stop-color="#28b428"/></linearGradient></defs><rect x="1.5" y="2.5" width="10" height="8" fill="url(#ginf)" stroke="#18881a"/><rect x="4.5" y="5.5" width="10" height="8" fill="url(#ginf)" stroke="#18881a"/></svg>
<div class="tl" style="left:141px;top:669px;letter-spacing:-0.21px">InfoData</div>
<svg class="ic" style="left:66px;top:688px" width="16" height="16"><defs><linearGradient id="gmr" x1="0" y1="0" x2="1" y2="1"><stop offset="0" stop-color="#f08890"/><stop offset="1" stop-color="#c02838"/></linearGradient><linearGradient id="gmy" x1="0" y1="0" x2="1" y2="1"><stop offset="0" stop-color="#f0f060"/><stop offset="1" stop-color="#e8d050"/></linearGradient></defs><rect x="0.5" y="9.5" width="6" height="6" fill="url(#gmr)" stroke="#8c1020"/><rect x="9.5" y="9.5" width="6" height="6" fill="url(#gmy)" stroke="#d09020"/><path d="M3.5 0 V7 M0 3.5 H7" stroke="#3c9a3c" stroke-width="3"/><path d="M3.5 1 V6 M1 3.5 H6" stroke="#a8dca8" stroke-width="1"/><path d="M6 4 H11" stroke="#f06030" stroke-width="2"/><path d="M10 0.5 L14 4 L10 7.5 Z" fill="#e82010"/></svg>
<div class="tl" style="left:87px;top:687px;letter-spacing:0.1px">Mappings</div>
</div>

<!-- Document tab -->
<div class="tab"><div class="abs" style="left:4px;top:3px;color:#fff;letter-spacing:0.4px">MAIN</div>
 <svg style="left:44px;top:5px" width="12" height="10"><path d="M1 4.5 H4.5 M4.5 1 V8" fill="none" stroke="#e4e8f0" stroke-width="1.3"/><rect x="5" y="2.2" width="3.6" height="4.6" fill="#34466a" stroke="#e4e8f0" stroke-width="1.3"/><rect x="7.5" y="2" width="1.5" height="5" fill="#e4e8f0"/></svg>
 <svg style="left:63px;top:5px" width="11" height="9"><path d="M0.8 0.8 L9.7 8.2 M9.7 0.8 L0.8 8.2" stroke="#e8ecf4" stroke-width="1.5"/></svg>
</div>
<svg style="left:1256px;top:8px" width="9" height="5"><path d="M0 0 H8 L4 4 Z" fill="#cfd6e5"/></svg>

<!-- Editor -->
<div class="abs" style="left:337px;top:0;width:1px;height:832px;background:#8d96b8"></div>
<div class="abs" style="left:338px;top:19px;width:6px;height:813px;background:#33476a;border-left:1px solid #2a3a58;border-right:1px solid #2a3a58"></div>
<div class="abs" style="left:344px;top:644px;width:923px;height:6px;background:#2f4262;border-top:1px solid #293955;border-bottom:1px solid #293955"></div>
<div class="ed" style="left:344px;top:18px;width:923px;height:626px;background:#fff;border-top:2px solid #4d6082;border-left:1px solid #8e9bc0;border-right:1px solid #8e9bc0;border-bottom:1px solid #8e9bc0"></div>
<div class="gsep" style="top:20px;height:118px"></div>
<div class="gcol" style="top:20px;height:118px"></div>
<div class="gsep" style="top:144px;height:499px"></div>
<div class="gcol" style="top:144px;height:499px"></div>
<div class="ln" style="top:21px;color:#b01818">1</div>
<div class="cd" style="top:20px"><span style="color:#0000e0">PROGRAM</span> MAIN</div>
<div class="ln" style="top:38px;color:#2b80c4">2</div>
<div class="cd" style="top:37px"><span style="color:#0000e0">VAR</span></div>
<div class="ln" style="top:55px;color:#2b80c4">3</div>
<div class="cd" style="top:54px">            Delay <span style="color:#0000e0">:</span> TON<span style="color:#0000e0">;</span></div>
<div class="ln" style="top:72px;color:#2b80c4">4</div>
<div class="cd" style="top:71px">            LedIn <span style="color:#0000e0">AT</span> <span style="color:#a000a0">%I*</span> <span style="color:#0000e0">:</span> <span style="color:#0000c0">BOOL</span><span style="color:#0000e0">;</span></div>
<div class="ln" style="top:89px;color:#2b80c4">5</div>
<div class="cd" style="top:88px">            LedOut <span style="color:#0000e0">AT</span> <span style="color:#a000a0">%Q*</span> <span style="color:#0000e0">:</span> <span style="color:#0000c0">BOOL</span><span style="color:#0000e0">;</span></div>
<div class="ln" style="top:106px;color:#2b80c4">6</div>
<div class="cd" style="top:105px">        <span style="color:#0000e0">END_VAR</span></div>
<div class="ln" style="top:144px;color:#2b80c4">1</div>
<div class="cd" style="top:143px">Delay<span style="color:#0000e0">(</span>IN <span style="color:#0000e0">:=</span> <span style="color:#808000">TRUE</span><span style="color:#0000e0">,</span> PT <span style="color:#0000e0">:=</span> <span style="color:#808000">T#1S</span><span style="color:#0000e0">)</span><span style="color:#0000e0">;</span></div>
<div class="ln" style="top:161px;color:#2b80c4">2</div>
<div class="cd" style="top:160px">        <span style="color:#0000e0">IF</span> Delay.Q <span style="color:#0000e0">THEN</span></div>
<div class="ln" style="top:178px;color:#2b80c4">3</div>
<div class="cd" style="top:177px">            LedOut <span style="color:#0000e0">:=</span> <span style="color:#0000e0">NOT</span> LedIn<span style="color:#0000e0">;</span></div>
<div class="ln" style="top:195px;color:#2b80c4">4</div>
<div class="cd" style="top:194px">            Delay<span style="color:#0000e0">(</span>IN <span style="color:#0000e0">:=</span> <span style="color:#808000">FALSE</span><span style="color:#0000e0">)</span><span style="color:#0000e0">;</span></div>
<div class="ln" style="top:212px;color:#b01818">5</div>
<div class="cd" style="top:211px">        <span style="color:#0000e0">END_IF</span><span style="color:#0000e0">;</span></div>
<div class="fold" style="left:350px;top:41px"></div>
<div class="fold" style="left:350px;top:148px"></div>
<div class="fold" style="left:350px;top:165px"></div>
<!-- upper scrollbar -->
<div class="abs" style="left:1226px;top:20px;width:16px;height:118px;background:#f0f0f0"></div>
<div class="abs" style="left:1226px;top:37px;width:16px;height:53px;background:#cdcdcd"></div>
<svg style="left:1230px;top:26px" width="9" height="6"><path d="M0.8 5 L4.2 1.2 L7.6 5" stroke="#555" stroke-width="2" fill="none"/></svg>
<svg style="left:1230px;top:127px" width="9" height="6"><path d="M0.5 0.5 L4 4.5 L7.5 0.5" stroke="#606060" stroke-width="1.8" fill="none"/></svg>
<div class="abs" style="left:1242px;top:20px;width:23px;height:118px;background:linear-gradient(to right,#fbfbf7,#cccbb2);border-bottom:1px solid #a8b0d0"></div>
<div class="abs" style="left:1242px;top:21px;width:21px;height:20px;background:#e4e8f4;border:1px solid #3c7fd6"></div>
<svg style="left:1245px;top:24px" width="16" height="15"><path d="M0 1.5 H6" stroke="#1a1ae8" stroke-width="1.2"/><path d="M2 3.5 H9 M10 3.5 H12 M2 5.5 H6 M7 5.5 H9 M2 7.5 H8 M9 7.5 H11 M2 11.5 H6 M8 11.5 H11" stroke="#111" stroke-width="1.2"/><path d="M2 9.5 H12" stroke="#1a9a1a" stroke-width="1.2"/><path d="M0 13.5 H9" stroke="#1a1ae8" stroke-width="1.2"/></svg>
<svg style="left:1245px;top:47px" width="15" height="14"><rect x="0.7" y="0.7" width="12.6" height="12.6" fill="#fff" stroke="#111" stroke-width="1.4"/><rect x="0" y="0" width="14" height="2" fill="#1010f0"/><path d="M1.4 5.5 H12.6 M1.4 8.5 H12.6 M1.4 11 H12.6 M6.5 2 V12.6 M9.5 2 V12.6" stroke="#b0b0b0" stroke-width="1"/></svg>
<div class="zoom" style="left:1158px;top:118px;width:46px;height:20px;line-height:22px">100</div>
<div class="mag" style="left:1205px;top:118px;width:21px;height:20px"></div>
<svg style="left:1207px;top:121px" width="18" height="16"><path d="M1.5 5.5 H5 M1.5 5.5 V14.5 H8.5 V10" fill="none" stroke="#111" stroke-width="1.3"/><rect x="2.5" y="6.5" width="5" height="7" fill="#c8c8c8"/><circle cx="8" cy="5" r="4.2" fill="#fff" fill-opacity="0.6" stroke="#111" stroke-width="1.3"/><path d="M5.5 4.5 H10 M5.5 6.5 H9" stroke="#10c8e0" stroke-width="1.2"/><path d="M10.8 8 L15.5 12.5" stroke="#111" stroke-width="2.2"/></svg>
<!-- splitter -->
<div class="abs" style="left:345px;top:138px;width:921px;height:6px;background:#f0f0f0;border-top:1px solid #a0a0a0;border-bottom:1px solid #a0a0a0"></div>
<svg style="left:793px;top:138px" width="26" height="7"><path d="M0.8 5.6 L4.5 1.2 L8.2 5.6 Z" fill="#9a9a9a" stroke="#666" stroke-width="0.9"/><path d="M16.8 1.2 L24.2 1.2 L20.5 5.6 Z" fill="#9a9a9a" stroke="#666" stroke-width="0.9"/></svg>
<div class="zoom" style="left:1199px;top:623px;width:47px;height:20px;line-height:22px">100</div>
<div class="mag" style="left:1246px;top:623px;width:20px;height:20px"></div>
<svg style="left:1248px;top:626px" width="18" height="16"><path d="M1.5 5.5 H5 M1.5 5.5 V14.5 H8.5 V10" fill="none" stroke="#111" stroke-width="1.3"/><rect x="2.5" y="6.5" width="5" height="7" fill="#c8c8c8"/><circle cx="8" cy="5" r="4.2" fill="#fff" fill-opacity="0.6" stroke="#111" stroke-width="1.3"/><path d="M5.5 4.5 H10 M5.5 6.5 H9" stroke="#10c8e0" stroke-width="1.2"/><path d="M10.8 8 L15.5 12.5" stroke="#111" stroke-width="2.2"/></svg>
<div class="redbox"></div>

<!-- Error list -->
<div id="el">
 <div id="elhdr"><div class="t">Error List</div>
  <svg style="left:873px;top:8px" width="9" height="5"><path d="M0 0 H8 L4 4 Z" fill="#fff"/></svg>
  <svg style="left:889px;top:5px" width="10" height="12"><path d="M2.5 0.5 H7.5 V6.5 H2.5 Z M1 6.5 H9 M5 6.5 V11" fill="none" stroke="#fff" stroke-width="1.2"/></svg>
  <svg style="left:905px;top:6px" width="10" height="9"><path d="M0.5 0.5 L9.5 8.5 M9.5 0.5 L0.5 8.5" stroke="#fff" stroke-width="1.4"/></svg>
 </div>
 <div id="eltb">
  <div class="dd" style="left:7px;top:3px;width:150px"><div class="t" style="letter-spacing:-0.15px">Entire Solution</div><svg style="left:139px;top:8px" width="6" height="4"><path d="M0 0 H5 L2.5 3 Z" fill="#1e1e1e"/></svg></div>
  <div class="vsep" style="left:163px;top:3px;height:20px"></div>
  <div class="abs" style="left:168px;top:2px;width:70px;height:22px;background:#fffcf4;border:1px solid #3c5a8c"></div>
  <svg style="left:172px;top:5px" width="15" height="16"><circle cx="7.5" cy="7.5" r="7.2" fill="#e51400"/><path d="M4.6 4.6 L10.4 10.4 M10.4 4.6 L4.6 10.4" stroke="#fff" stroke-width="2.4"/></svg>
  <div class="abs" style="left:191px;top:6px;letter-spacing:-0.6px">0 Errors</div>
  <div class="vsep" style="left:242px;top:3px;height:20px"></div>
  <svg style="left:249px;top:5px" width="16" height="15"><path d="M8 0.5 L15.5 14 H0.5 Z" fill="#ffcc00"/><rect x="7" y="5" width="2" height="5" fill="#111"/><rect x="7" y="11" width="2" height="2" fill="#111"/></svg>
  <div class="abs" style="left:269px;top:6px;letter-spacing:-0.13px">0 of 1 Warning</div>
  <div class="vsep" style="left:357px;top:3px;height:20px"></div>
  <svg style="left:365px;top:5px" width="15" height="15"><circle cx="7.5" cy="7.5" r="7" fill="#1ba1e2"/><rect x="6.5" y="6" width="2" height="6" fill="#fff"/><rect x="6.5" y="3" width="2" height="2" fill="#fff"/></svg>
  <div class="abs" style="left:385px;top:6px;letter-spacing:-0.55px">0 Messages</div>
  <div class="vsep" style="left:456px;top:3px;height:20px"></div>
  <div class="abs" style="left:464px;top:6px;color:#a2a4a5">Clear</div>
  <div class="vsep" style="left:502px;top:3px;height:20px"></div>
  <div class="dd" style="left:510px;top:3px;width:149px"><div class="t" style="letter-spacing:-0.18px">Build + IntelliSense</div><svg style="left:138px;top:8px" width="6" height="4"><path d="M0 0 H5 L2.5 3 Z" fill="#1e1e1e"/></svg></div>
  <div class="dd" style="left:721px;top:3px;width:200px"><div class="t" style="color:#6d6d6d;letter-spacing:-0.42px">Search Error List</div>
   <svg style="left:170px;top:1px" width="15" height="16"><circle cx="9.5" cy="6" r="4" fill="none" stroke="#555" stroke-width="1.8"/><path d="M6.8 8.8 L2.5 13.2" stroke="#555" stroke-width="2.6" stroke-linecap="round"/></svg>
   <svg style="left:189px;top:7px" width="7" height="4"><path d="M0 0 H6 L3 3 Z" fill="#555"/></svg>
  </div>
 </div>
 <div id="elcol">
  <div class="csep" style="left:27px"></div>
  <svg style="left:43px;top:4px" width="7" height="6"><path d="M0 0.5 H6 M3 2.5 H6 M4 4.5 H6 M5 0 V6" stroke="#555" stroke-width="1"/></svg>
  <div class="csep" style="left:53px"></div>
  <div class="ch" style="left:57px">Description</div>
  <svg style="left:125px;top:9px" width="9" height="5"><path d="M0 0 H8 L4 4 Z" fill="#555"/></svg>
  <div class="csep" style="left:565px"></div>
  <div class="ch" style="left:569px">Project</div>
  <div class="csep" style="left:715px"></div>
  <div class="ch" style="left:719px">File</div>
  <div class="csep" style="left:865px"></div>
  <div class="ch" style="left:869px">Line</div>
  <div class="csep" style="left:900px"></div>
  <div class="csep" style="left:920px"></div>
 </div>
</div>
<div class="abs" style="left:345px;top:824px;width:56px;height:8px;background:#fff"></div>
<div class="abs" style="left:350px;top:827px;color:#1e1e1e">Error List</div>
<div class="abs" style="left:401px;top:824px;width:51px;height:8px;background:#4d6082;border-top:1px solid #6a7c9c"></div>
<div class="abs" style="left:407px;top:827px;color:#fff;width:44px;height:5px;overflow:hidden">Output</div>
</body></html>
